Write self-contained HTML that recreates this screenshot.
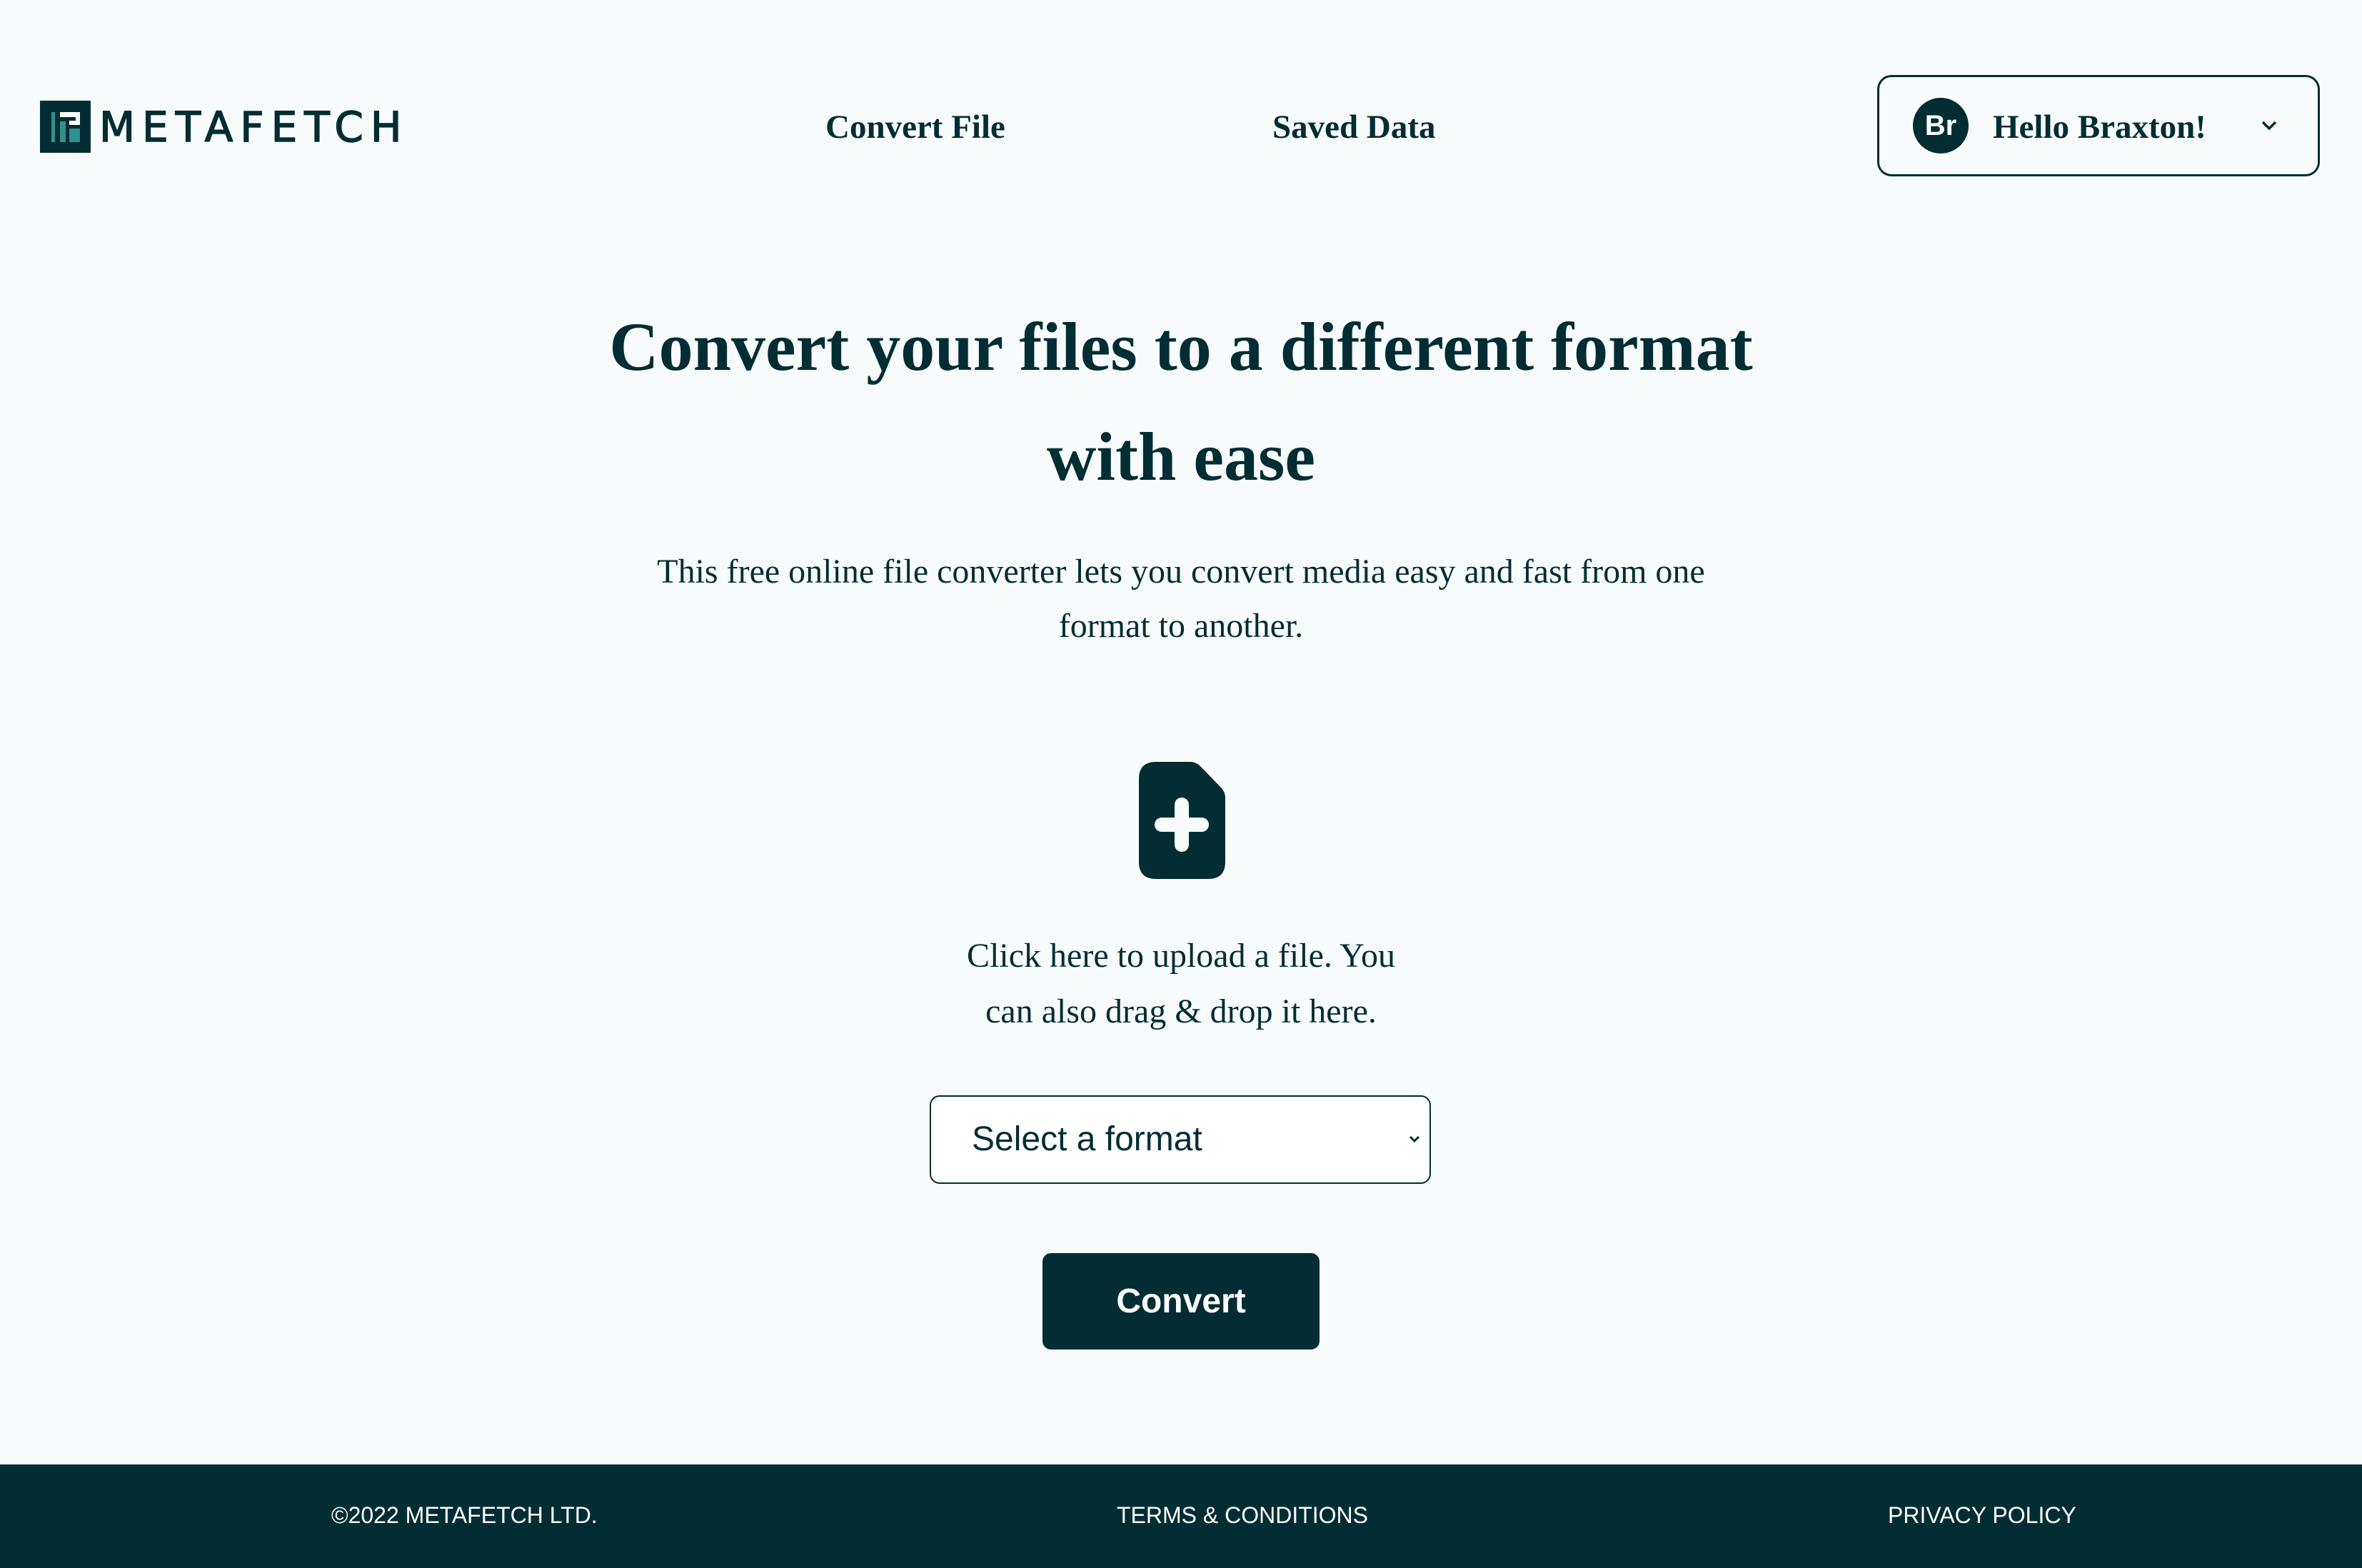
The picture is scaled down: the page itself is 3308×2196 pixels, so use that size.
<!DOCTYPE html>
<html><head><meta charset="utf-8"><style>
*{margin:0;padding:0;box-sizing:border-box}
body{width:3308px;height:2196px;background:#f7fbfc;color:#022d33;position:relative;overflow:hidden;font-family:"Liberation Serif",serif}
.a{position:absolute}
.nav{font-weight:bold;font-size:47px;top:151px;white-space:nowrap}
.c{left:0;width:3308px;text-align:center}
</style></head><body>
<div class="a" style="left:56px;top:141px;width:71px;height:73px;background:#022d33">
<svg width="71" height="73" viewBox="0 0 71 73"><rect x="16" y="16" width="5" height="42" fill="#2e9190"/><rect x="28" y="29" width="8" height="29" fill="#2e9190"/><rect x="41" y="39" width="15" height="19" fill="#2e9190"/><rect x="28" y="16" width="28" height="7" fill="#fff"/><rect x="50" y="16" width="6" height="18" fill="#fff"/><rect x="41" y="28" width="15" height="6" fill="#fff"/></svg></div>
<div class="a" style="left:139px;top:140px;font-family:'DejaVu Sans',sans-serif;font-size:58px;letter-spacing:10px;line-height:76px;color:#022d33;-webkit-text-stroke:1.5px #022d33">METAFETCH</div>
<div class="a nav" style="left:1156px">Convert File</div>
<div class="a nav" style="left:1782px">Saved Data</div>
<div class="a" style="left:2629px;top:105px;width:620px;height:142px;border:3px solid #022d33;border-radius:20px"></div>
<div class="a" style="left:2679px;top:137px;width:78px;height:78px;border-radius:50%;background:#022d33;color:#fff;font-family:'Liberation Sans',sans-serif;font-weight:bold;font-size:40px;line-height:78px;text-align:center">Br</div>
<div class="a nav" style="left:2791px;top:151px">Hello Braxton!</div>
<svg class="a" style="left:3165px;top:166px" width="26" height="18" viewBox="0 0 26 18"><path d="M4 5l9 9 9-9" stroke="#022d33" stroke-width="3.5" fill="none"/></svg>
<div class="a c" style="top:409px;font-weight:bold;font-size:96px;line-height:154px">Convert your files to a different format<br>with ease</div>
<div class="a c" style="top:763px;font-size:48px;line-height:76px">This free online file converter lets you convert media easy and fast from one<br>format to another.</div>
<svg class="a" style="left:1595px;top:1067px" width="121" height="164" viewBox="0 0 121 164"><path d="M24 0h48q8 0 14 6l29 30q6 6 6 14v90q0 24-24 24h-73q-24 0-24-24v-116q0-24 24-24z" fill="#022d33"/><path d="M60 60v56M32 88h56" stroke="#f7fbfc" stroke-width="20" stroke-linecap="round"/></svg>
<div class="a c" style="top:1300px;font-size:48px;line-height:78px">Click here to upload a file. You<br>can also drag &amp; drop it here.</div>
<div class="a" style="left:1302px;top:1534px;width:702px;height:124px;border:2px solid #022d33;border-radius:14px;background:#fff"></div>
<div class="a" style="left:1361px;top:1568px;font-family:'Liberation Sans',sans-serif;font-size:48px">Select a format</div>
<svg class="a" style="left:1972px;top:1588px" width="18" height="14" viewBox="0 0 18 14"><path d="M3 4l6 6 6-6" stroke="#022d33" stroke-width="3" fill="none"/></svg>
<div class="a" style="left:1460px;top:1755px;width:388px;height:135px;background:#022d33;border-radius:12px;color:#fff;font-family:'Liberation Sans',sans-serif;font-weight:bold;font-size:48px;line-height:135px;text-align:center">Convert</div>
<div class="a" style="left:0;top:2051px;width:3308px;height:145px;background:#022d33;color:#fff;font-family:'Liberation Sans',sans-serif;font-size:32px">
<div class="a" style="left:464px;top:53px">©2022 METAFETCH LTD.</div>
<div class="a" style="left:1540px;width:400px;text-align:center;top:53px">TERMS &amp; CONDITIONS</div>
<div class="a" style="left:2644px;top:53px">PRIVACY POLICY</div>
</div>
</body></html>
